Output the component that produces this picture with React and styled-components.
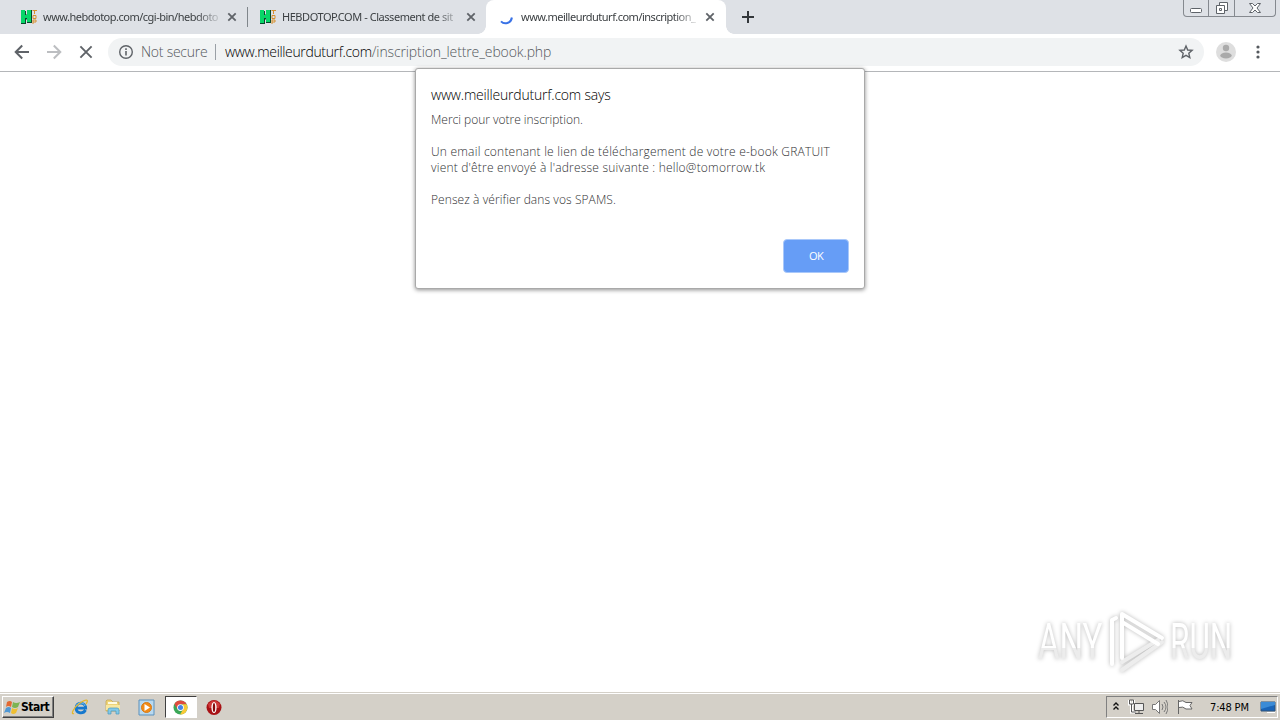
import styled, { createGlobalStyle, css } from "styled-components";

const GlobalStyle = createGlobalStyle`
  * {
    box-sizing: border-box;
  }

  body {
    margin: 0;
    overflow: hidden;
    background: #fff;
    font-family: "Open Sans", "Noto Sans", sans-serif;
  }
`;

const Screen = styled.div`
  position: relative;
  display: flex;
  flex-direction: column;
  width: 1280px;
  height: 720px;
`;

const TabStrip = styled.div`
  display: flex;
  height: 34px;
  padding-left: 8px;
  background: #dee1e6;
`;

const TabItem = styled.div`
  position: relative;
  display: flex;
  align-items: center;
  width: ${(props) => props.$width}px;
  height: 34px;
  padding: 0 10px 0 12px;
  color: #3c4043;

  ${(props) =>
    props.$active &&
    css`
      padding-right: 11px;
      background: #fff;
      border-radius: 8px 8px 0 0;

      &::before,
      &::after {
        content: "";
        position: absolute;
        bottom: 0;
        width: 8px;
        height: 8px;
      }

      &::before {
        left: -8px;
        background: radial-gradient(circle at 0 0, transparent 7.5px, #fff 8px);
      }

      &::after {
        right: -8px;
        background: radial-gradient(circle at 100% 0, transparent 7.5px, #fff 8px);
      }
    `}
`;

const TabIcon = styled.div`
  display: flex;
  flex: none;
  width: 17px;
  height: 17px;
  margin-right: 6px;
`;

const TabTitle = styled.div`
  flex: 1;
  min-width: 0;
  font-family: "Noto Sans", sans-serif;
  font-size: 11px;
  line-height: 18px;
  letter-spacing: ${(props) => props.$spacing}px;
  white-space: nowrap;
  mask-image: linear-gradient(to right, #000 calc(100% - 22px), rgba(0, 0, 0, 0.2));
`;

const CloseIcon = styled.svg`
  flex: none;
  width: 10px;
  height: 10px;
  margin-left: 9px;
`;

const TabDivider = styled.div`
  width: 1px;
  height: 20px;
  margin: 7px -1px 0 0;
  background: #80868b;
`;

const NewTab = styled.svg`
  width: 12px;
  height: 12px;
  margin: 11px 0 0 16px;
`;

const WindowControls = styled.div`
  display: flex;
  height: 17px;
  margin: 0 4px 0 auto;
  border: 1px solid #85898f;
  border-top: 0;
  border-radius: 0 0 4px 4px;
`;

const WindowButton = styled.div`
  display: flex;
  justify-content: center;
  width: ${(props) => props.$width}px;

  & + & {
    border-left: 1px solid #85898f;
  }
`;

const Toolbar = styled.div`
  display: flex;
  align-items: center;
  height: 38px;
  padding: 0 0 1px 14px;
  border-bottom: 1px solid #b4b6b9;
  background: #fff;
`;

const NavIcon = styled.svg`
  flex: none;
  width: 16px;
  height: 16px;
  margin-right: 16px;
`;

const AddressBar = styled.div`
  display: flex;
  align-items: center;
  width: 1096px;
  height: 28px;
  margin-left: -2px;
  padding: 0 10px;
  border-radius: 14px;
  background: #f1f3f4;
  color: #54585c;
  font-size: 14px;
  font-weight: 300;
  line-height: 20px;
  white-space: nowrap;
`;

const Security = styled.div`
  width: 67px;
  margin-left: 7px;
  letter-spacing: -0.25px;
`;

const AddressDivider = styled.div`
  width: 1px;
  height: 16px;
  margin: 0 9px 0 7px;
  background: #9aa0a6;
`;

const Host = styled.span`
  color: #000;
  letter-spacing: -0.35px;
`;

const Path = styled.span`
  letter-spacing: -0.12px;
`;

const Star = styled.svg`
  width: 16px;
  height: 16px;
  margin-left: auto;
`;

const Avatar = styled.svg`
  width: 20px;
  height: 20px;
  margin-left: 12px;
`;

const MenuDots = styled.svg`
  width: 4px;
  height: 16px;
  margin-left: 20px;
`;

const Page = styled.div`
  flex: 1;
  background: #fff;
`;

const Dialog = styled.div`
  position: absolute;
  top: 68px;
  left: 415px;
  display: flex;
  flex-direction: column;
  width: 450px;
  height: 221px;
  padding: 16px 15px 15px;
  border: 1px solid #a9a9a9;
  border-radius: 3px;
  background: #fff;
  box-shadow: 0 1px 4px rgba(0, 0, 0, 0.45);
`;

const DialogTitle = styled.div`
  color: #000;
  font-size: 14px;
  font-weight: 300;
  line-height: 20px;
  letter-spacing: -0.2px;
  white-space: nowrap;
`;

const DialogText = styled.div`
  margin-top: 7px;
  color: #2f3032;
  font-size: 12px;
  font-weight: 300;
  line-height: 16px;
`;

const DialogLine = styled.div`
  height: 16px;
  letter-spacing: ${(props) => props.$spacing || 0}px;
  white-space: nowrap;
`;

const DialogButton = styled.button`
  align-self: flex-end;
  width: 66px;
  height: 34px;
  margin-top: auto;
  padding: 0 0 2px;
  border: 1px solid #a9c8fa;
  border-radius: 4px;
  background: #669df6;
  color: #fff;
  font: 11px "Open Sans", sans-serif;
  letter-spacing: -0.6px;
`;

const Watermark = styled.div`
  position: absolute;
  top: 606px;
  left: 1038px;
  display: flex;
  align-items: center;
  height: 70px;
  filter: drop-shadow(0 0 2px rgba(0, 0, 0, 0.28));
`;

const WatermarkWord = styled.div`
  width: 64px;
  height: 58px;
`;

const WatermarkText = styled.div`
  width: max-content;
  color: transparent;
  background: linear-gradient(#fff 60%, #ececec 60%);
  background-clip: text;
  font-family: Roboto, sans-serif;
  font-size: 50px;
  line-height: 60px;
  transform: scaleX(${(props) => props.$scale});
  transform-origin: left;
  white-space: nowrap;
`;

const WatermarkLogo = styled.svg`
  width: 58px;
  height: 66px;
  margin: 0 5px 0 5px;
`;

const Taskbar = styled.div`
  display: flex;
  align-items: center;
  height: 28px;
  padding: 2px 2px 0;
  border-top: 1px solid #d4d0c8;
  background: #d4d0c8;
  box-shadow: inset 0 1px #fff;
`;

const StartButton = styled.div`
  display: flex;
  align-items: center;
  width: 52px;
  height: 22px;
  margin-top: -1px;
  padding-left: 1px;
  border: 1px solid;
  border-color: #fff #404040 #404040 #fff;
  box-shadow: inset -1px -1px #808080;
  color: #000;
  font-family: "DejaVu Sans Condensed", "DejaVu Sans", sans-serif;
  font-size: 12px;
  font-weight: bold;
  letter-spacing: -0.5px;
`;

const StartFlag = styled.svg`
  flex: none;
  width: 17px;
  height: 17px;
`;

const QuickLaunch = styled.div`
  display: flex;
  align-items: center;
  margin: -1px 0 0 9px;
`;

const LaunchItem = styled.div`
  display: flex;
  align-items: center;
  justify-content: center;
  width: 33.5px;
  height: 22px;

  ${(props) =>
    props.$active &&
    css`
      width: 32px;
      margin: 0 1px;
      border: 1px solid;
      border-color: #404040 #fff #fff #404040;
      background: #fff;
    `}
`;

const Tray = styled.div`
  display: flex;
  align-items: center;
  width: 172px;
  height: 22px;
  margin: -1px 0 0 auto;
  padding-left: 6px;
  border: 1px solid;
  border-color: #808080 #fff #fff #808080;
`;

const TrayIcon = styled.svg`
  flex: none;
  width: ${(props) => props.$width}px;
  height: 16px;
  margin-right: ${(props) => props.$gap}px;
`;

const Clock = styled.div`
  width: 50px;
  color: #000;
  font-family: "DejaVu Sans Condensed", sans-serif;
  font-size: 11px;
  letter-spacing: -0.15px;
  white-space: nowrap;
`;

const HebdotopIcon = () => (
  <svg width="17" height="17" viewBox="0 0 17 17">
    <path d="M1 2h5v4l1-1V1h5v13H7v-4l-1 1v4H1z" fill="#08482c" />
    <path d="M1 1h4v5h2V1h4v12H7V9H5v5H1z" fill="#08d568" />
    <path d="M12.5 1.5H17M14.5 2v3M13 6.5h3v3h-3zM13 15v-4h3v2h-3" fill="none" stroke="#d7902e" />
  </svg>
);

const LoadingIcon = () => (
  <svg width="17" height="17" viewBox="0 0 17 17">
    <path d="M3 12.3C6.2 15.8 13 14.6 13.9 8.5" fill="none" stroke="#3972e6" strokeWidth="2" />
  </svg>
);

const TabClose = () => (
  <CloseIcon viewBox="0 0 10 10">
    <path d="M1.3 1.3l7.4 7.4M8.7 1.3L1.3 8.7" stroke="#5f6368" strokeWidth="1.8" />
  </CloseIcon>
);

const Tab = ({ title, icon, width, active, spacing }) => (
  <TabItem $width={width} $active={active}>
    <TabIcon>{icon}</TabIcon>
    <TabTitle $spacing={spacing}>{title}</TabTitle>
    <TabClose />
  </TabItem>
);

const ExplorerIcon = () => (
  <svg width="18" height="18" viewBox="0 0 18 18">
    <path d="M14.5 12C12.5 16 5 16 5 10c0-6.5 9.5-6.3 9.7.2H6" fill="none" stroke="#1678cd" strokeWidth="2.8" />
    <path d="M5 8.5C6 3.8 13 3.6 14 8" fill="none" stroke="#79c7ef" />
    <path d="M3 15.5C-1 17 3 9 9 5c7-5 9-3 6 1" fill="none" stroke="#e4b72f" strokeWidth="1.3" />
  </svg>
);

const FolderIcon = () => (
  <svg width="18" height="18" viewBox="0 0 18 18">
    <path d="M2 3l1-1h4l2 2h6v9H2z" fill="#eed478" stroke="#c3a44c" strokeWidth=".7" />
    <path d="M4 4h9v2H4z" fill="#fffbe2" />
    <path d="M2 7h14v5H2z" fill="#f8e7a0" />
    <path d="M4 16v-4q0-2 2-2h7q2 0 2 2v4h-3v-3H7v3z" fill="#83c9e8" stroke="#4898bd" strokeWidth=".7" />
  </svg>
);

const PlayerIcon = () => (
  <svg width="17" height="17" viewBox="0 0 17 17">
    <path d="M1 1h15v15H1z" fill="#b9d9ef" stroke="#5a91bd" />
    <circle cx="8.5" cy="8.5" r="5" fill="#f28a16" stroke="#d67b18" />
    <path d="M6.5 5l5.5 3.5L6.5 12z" fill="#fff" />
  </svg>
);

const ChromeIcon = () => (
  <svg width="15" height="15" viewBox="0 0 16 16">
    <circle cx="8" cy="8" r="7.5" fill="#3aa757" />
    <path d="M1.5 4.3A7.5 7.5 0 0 1 14.5 4.5H8L5 10z" fill="#df4b3e" />
    <path d="M14.5 4.5A7.5 7.5 0 0 1 7.5 15.5l3.5-6-1-5z" fill="#f9c936" />
    <circle cx="8" cy="8" r="3.6" fill="#fff" />
    <circle cx="8" cy="8" r="2.7" fill="#4384e6" />
  </svg>
);

const OperaIcon = () => (
  <svg width="16" height="17" viewBox="0 0 16 17">
    <circle cx="8" cy="8.5" r="7.5" fill="#a81115" />
    <path d="M2 5q6-7 12 0l-1 4H3z" fill="#cf3939" />
    <ellipse cx="8" cy="8.5" rx="2.6" ry="5.5" fill="#fff" />
    <ellipse cx="8" cy="8.5" rx="1.2" ry="4.5" fill="#870b0c" />
  </svg>
);

const App = () => {
  return (
    <Screen>
      <GlobalStyle />
      <TabStrip>
        <Tab title="www.hebdotop.com/cgi-bin/hebdoto" icon={<HebdotopIcon />} width={239} spacing={-0.5} />
        <TabDivider />
        <Tab title="HEBDOTOP.COM - Classement de sit" icon={<HebdotopIcon />} width={239} spacing={-0.45} />
        <Tab
          title="www.meilleurduturf.com/inscription_"
          icon={<LoadingIcon />}
          width={240}
          spacing={-0.5}
          active
        />
        <NewTab viewBox="0 0 12 12">
          <path d="M6 0v12M0 6h12" stroke="#33373b" strokeWidth="2" />
        </NewTab>
        <WindowControls>
          <WindowButton $width={24}>
            <svg width="12" height="16" viewBox="0 0 12 16">
              <rect x=".5" y="8.5" width="11" height="4" rx="1" fill="#fff" stroke="#5e6369" />
            </svg>
          </WindowButton>
          <WindowButton $width={26}>
            <svg width="14" height="16" viewBox="0 0 14 16">
              <path d="M4.5 2.5h8v8h-8z" fill="#fff" stroke="#5e6369" />
              <path d="M1.5 5.5h8v8h-8zM4.5 8.5h2v2h-2z" fill="#fff" stroke="#5e6369" />
            </svg>
          </WindowButton>
          <WindowButton $width={41}>
            <svg width="12" height="16" viewBox="0 0 12 16">
              <path
                d="M.5 3.5h3L6 6l2.5-2.5h3L8 8l3.5 4.5h-3L6 10l-2.5 2.5h-3L4 8z"
                fill="#fff"
                stroke="#5e6369"
              />
            </svg>
          </WindowButton>
        </WindowControls>
      </TabStrip>

      <Toolbar>
        <NavIcon viewBox="0 0 16 16">
          <path d="M15 8H2M8.2 1.5L1.7 8l6.5 6.5" fill="none" stroke="#5f6368" strokeWidth="2" />
        </NavIcon>
        <NavIcon viewBox="0 0 16 16">
          <path d="M1 8h13M7.8 1.5L14.3 8l-6.5 6.5" fill="none" stroke="#bcbec1" strokeWidth="2" />
        </NavIcon>
        <NavIcon viewBox="0 0 16 16">
          <path d="M2.4 2.4l11.2 11.2M13.6 2.4L2.4 13.6" stroke="#5f6368" strokeWidth="1.9" />
        </NavIcon>
        <AddressBar>
          <svg width="16" height="16" viewBox="0 0 16 16">
            <circle cx="8" cy="8" r="6.3" fill="none" stroke="#5f6368" strokeWidth="1.4" />
            <path d="M8 7v4.5M8 4.3v1.6" stroke="#5f6368" strokeWidth="1.6" />
          </svg>
          <Security>Not secure</Security>
          <AddressDivider />
          <Host>www.meilleurduturf.com</Host>
          <Path>/inscription_lettre_ebook.php</Path>
          <Star viewBox="0 0 16 16">
            <path
              d="M8 2l1.7 4 4.4.4-3.3 2.9 1 4.3L8 11.3l-3.8 2.3 1-4.3-3.3-2.9L6.3 6z"
              fill="none"
              stroke="#5f6368"
              strokeWidth="1.4"
            />
          </Star>
        </AddressBar>
        <Avatar viewBox="0 0 20 20">
          <circle cx="10" cy="10" r="10" fill="#dedede" />
          <circle cx="10" cy="6" r="3.2" fill="#aaa" />
          <ellipse cx="10" cy="13.5" rx="5.7" ry="3" fill="#aaa" />
        </Avatar>
        <MenuDots viewBox="0 0 4 16">
          <circle cx="2" cy="3" r="1.6" fill="#55595e" />
          <circle cx="2" cy="8" r="1.6" fill="#55595e" />
          <circle cx="2" cy="13" r="1.6" fill="#55595e" />
        </MenuDots>
      </Toolbar>

      <Page />

      <Taskbar>
        <StartButton>
          <StartFlag viewBox="0 0 17 17">
            <path d="M3 3q3-2 5 0L7 8Q4 6 2 8z" fill="#e36932" />
            <path d="M9 3q3 2 7 0l-2 5q-3 2-6 0z" fill="#7db452" />
            <path d="M2 9q3-2 5 0l-1 5q-3-2-6 0z" fill="#5098d4" />
            <path d="M8 9q3 2 6 0l-2 5q-3 2-5 0z" fill="#efbf32" />
          </StartFlag>
          Start
        </StartButton>
        <QuickLaunch>
          <LaunchItem><ExplorerIcon /></LaunchItem>
          <LaunchItem><FolderIcon /></LaunchItem>
          <LaunchItem><PlayerIcon /></LaunchItem>
          <LaunchItem $active><ChromeIcon /></LaunchItem>
          <LaunchItem><OperaIcon /></LaunchItem>
        </QuickLaunch>
        <Tray>
          <TrayIcon $width={6} $gap={9} viewBox="0 0 6 16">
            <path d="M.5 6.5L3 4l2.5 2.5M.5 10.5L3 8l2.5 2.5" fill="none" stroke="#111" strokeWidth="1.4" />
          </TrayIcon>
          <TrayIcon $width={16} $gap={8} viewBox="0 0 16 16">
            <path d="M1.5 1v4h4V1M3.5 5v8H8" fill="none" stroke="#fff" strokeWidth="3" />
            <path d="M6.5 4.5h9v7h-9zM7 14.5h8M11 12v2" fill="#eee" stroke="#555" />
            <path d="M1.5 1v4h4V1zM3.5 5v8H8" fill="none" stroke="#555" />
          </TrayIcon>
          <TrayIcon $width={16} $gap={9} viewBox="0 0 16 16">
            <path d="M.5 5.5h3l4-4v13l-4-4h-3z" fill="#fff" stroke="#777" />
            <path d="M10 5q2 3 0 6M12 3q4 5 0 10M14 1q4 7 0 14" fill="none" stroke="#777" />
          </TrayIcon>
          <TrayIcon $width={16} $gap={17} viewBox="0 0 16 16">
            <path d="M1.5 1v14M2 2.5q4-2 7 1h6l-2 3 2 3.5H9Q6 7 2 8.5" fill="#fff" stroke="#666" />
          </TrayIcon>
          <Clock>7:48 PM</Clock>
          <TrayIcon $width={16} $gap={0} viewBox="0 0 16 16">
            <path d="M1 3h14v9H1z" fill="#1964b8" stroke="#305276" />
            <path d="M1 3h14v3L1 10z" fill="#3b8bd6" />
            <path d="M7 13h8v1H7z" fill="#fff" />
          </TrayIcon>
        </Tray>
      </Taskbar>

      <Dialog>
        <DialogTitle>www.meilleurduturf.com says</DialogTitle>
        <DialogText>
          <DialogLine $spacing={-0.02}>Merci pour votre inscription.</DialogLine>
          <DialogLine />
          <DialogLine $spacing={0.22}>
            Un email contenant le lien de téléchargement de votre e-book GRATUIT
          </DialogLine>
          <DialogLine $spacing={0.2}>vient d'être envoyé à l'adresse suivante : hello@tomorrow.tk</DialogLine>
          <DialogLine />
          <DialogLine $spacing={0.08}>Pensez à vérifier dans vos SPAMS.</DialogLine>
        </DialogText>
        <DialogButton>OK</DialogButton>
      </Dialog>

      <Watermark>
        <WatermarkWord>
          <WatermarkText $scale={0.66}>ANY</WatermarkText>
        </WatermarkWord>
        <WatermarkLogo viewBox="0 0 58 66">
          <path d="M15 62l40-28M15 54l36-22" fill="none" stroke="#ededed" strokeWidth="4" strokeLinecap="round" />
          <path
            d="M15 50V6l40 24M15 14l36 22M9 10l-4 2v44"
            fill="none"
            stroke="#fff"
            strokeWidth="4"
            strokeLinecap="round"
            strokeLinejoin="round"
          />
        </WatermarkLogo>
        <WatermarkWord>
          <WatermarkText $scale={0.63}>RUN</WatermarkText>
        </WatermarkWord>
      </Watermark>
    </Screen>
  );
};

export default App;
